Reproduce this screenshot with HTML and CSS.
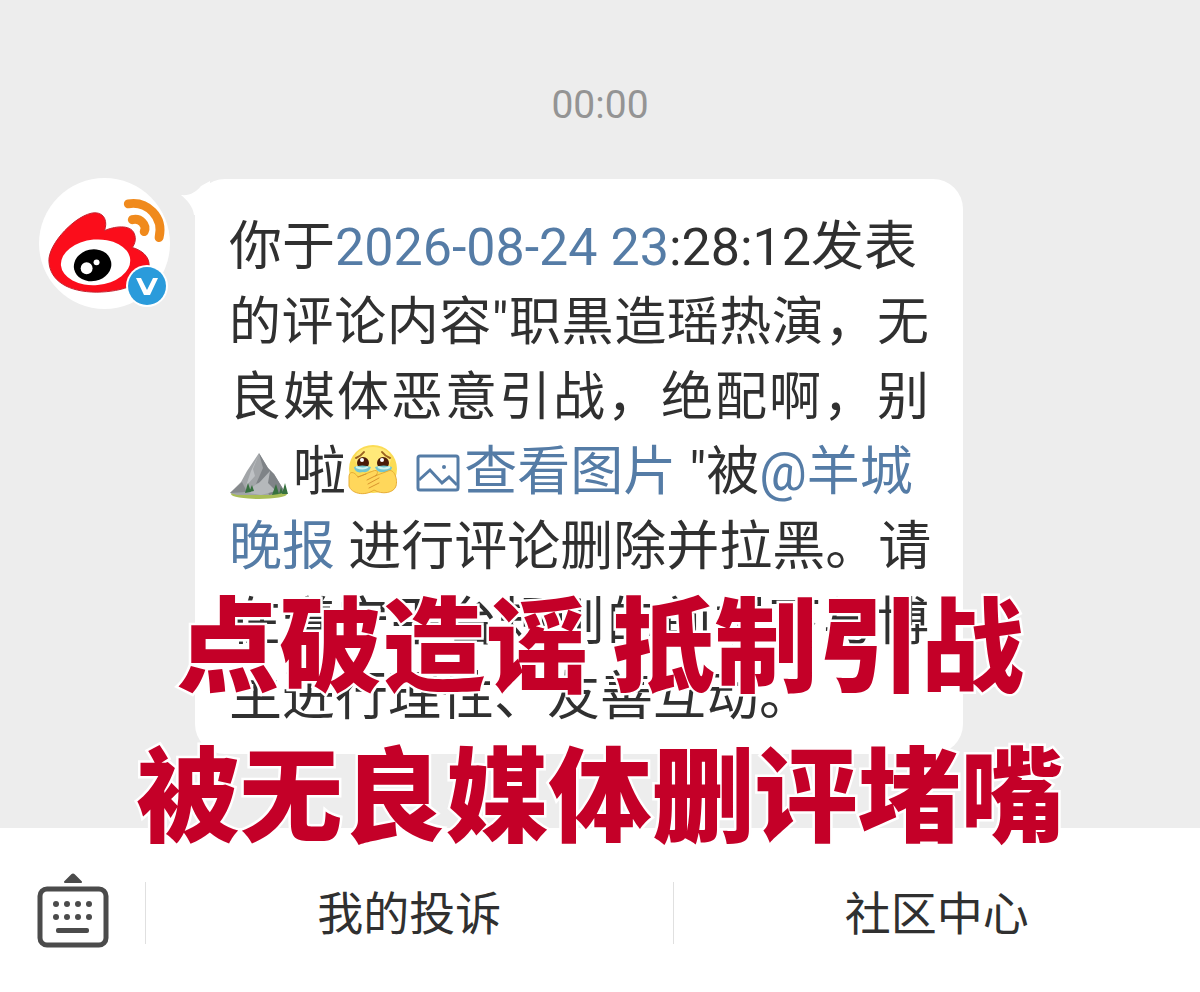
FILE: index.html
```
<!DOCTYPE html>
<html lang="zh-CN">

<head>
    <meta charset="UTF-8">
    <title>消息</title>
    <link rel="stylesheet" href="styles.css">
</head>

<body>

<main class="chat">
    <time class="time">00:00</time>

    <div class="message">
        <div class="avatar">
            <svg class="logo" viewBox="0 0 132 132" aria-hidden="true">
                <path d="M10 84C9 66 38 36 56 35C67 35 69 45 66 53C75 49 92 46 96 56C98 61 97 66 94 70C104 73 111 79 111 88C110 106 84 115 58 115C30 115 11 104 10 84Z" fill="#fb0d1b" stroke="#c5202d" stroke-width="1"/>
                <ellipse cx="57" cy="85" rx="35" ry="23" transform="rotate(-5 57 85)" fill="#fff"/>
                <ellipse cx="54" cy="88" rx="19" ry="16" transform="rotate(-12 54 88)" fill="#000"/>
                <circle cx="48" cy="91" r="6" fill="#fff"/>
                <circle cx="58" cy="85" r="3" fill="#fff"/>
                <path d="M90 26C109 23 126 39 121 60" fill="none" stroke="#f08a1d" stroke-width="9" stroke-linecap="round"/>
                <path d="M94 42C102 40 109 47 106 54" fill="none" stroke="#f08a1d" stroke-width="9" stroke-linecap="round"/>
            </svg>
            <svg class="badge" viewBox="0 0 42 42" aria-hidden="true">
                <circle cx="21" cy="21" r="21" fill="#fff"/>
                <circle cx="21" cy="21" r="19" fill="#2a9bdb"/>
                <path d="M10 13H15L21 25L27 13H32L24 30H18Z" fill="#fff"/>
            </svg>
        </div>

        <div class="bubble">
            <svg class="tail" viewBox="0 0 30 34" aria-hidden="true">
                <path d="M1 14C10 15 16 11 21 5L30 0V34H14C13 26 8 20 1 14Z" fill="#fff"/>
            </svg>
            <p class="text">
                你于<span class="date"><a href="#">2026-08-24 23</a>:28:12</span>发表
                <span class="full">的评论内容"职黒造瑶热演，无</span>
                <span class="full">良媒体恶意引战，绝配啊，别</span>
                <svg class="mountain" viewBox="0 0 60 52" role="img" aria-label="山">
                    <ellipse cx="30" cy="45" rx="28" ry="5" fill="#a9bd58"/>
                    <path d="M1 44L12 33L18 22L30 4L39 19L45 25L56 43L40 46H8Z" fill="#a2a5a8"/>
                    <path d="M30 4L39 19L45 25L56 43L40 46L36 31L27 35L34 19Z" fill="#7f8387"/>
                    <path d="M30 5L24 20L26 27L17 37L22 22Z" fill="#bec1c4"/>
                    <path d="M14 43L30 34L41 22L39 34L47 42L32 46Z" fill="#b5b8bb"/>
                    <path d="M1 44L13 33L18 43Z" fill="#85898c"/>
                    <path d="M16 44L19 34L22 43ZM20 43L23 36L25 42ZM43 46L47 35L50 45ZM50 45L52 38L54 44ZM53 45L56 34L59 45Z" fill="#37713f"/>
                </svg>啦<svg class="emoji" viewBox="0 0 52 52" role="img" aria-label="流泪">
                    <circle cx="26" cy="25" r="24" fill="#fbdc55"/>
                    <ellipse cx="26" cy="15" rx="18" ry="12" fill="#ffe979"/>
                    <path d="M9 14Q14 12 17 8M43 14Q38 12 35 8" fill="none" stroke="#9b6220" stroke-width="2" stroke-linecap="round"/>
                    <circle cx="16" cy="19" r="6" fill="#4b1c08"/>
                    <circle cx="36" cy="19" r="6" fill="#4b1c08"/>
                    <circle cx="15" cy="16" r="2" fill="#fff"/>
                    <circle cx="35" cy="16" r="2" fill="#fff"/>
                    <path d="M7 23Q15 20 24 23Q22 29 16 28Q8 30 7 23ZM28 23Q37 20 45 23Q44 30 36 28Q30 29 28 23Z" fill="#72c5cf"/>
                    <path d="M9 23Q16 26 21 23M31 23Q37 26 43 23" fill="none" stroke="#d1f5ef" stroke-width="2"/>
                    <path d="M2 33C2 27 7 27 11 33L26 27C31 25 32 29 28 32L41 27C47 24 51 35 49 42C47 49 35 51 27 46C17 53 4 49 2 42Z" fill="#ffd75b" stroke="#e7ad35" stroke-width="1"/>
                    <path d="M11 33L19 30M20 36L30 31M21 40L32 34M22 44L32 39" fill="none" stroke="#d9942e" stroke-width="1" stroke-linecap="round"/>
                </svg>
                <a href="#"><svg class="picture" viewBox="0 0 44 38" aria-hidden="true">
                    <rect x="2" y="2" width="40" height="34" rx="2" fill="none" stroke="#557ca6" stroke-width="3"/>
                    <path d="M3 26L14 16L26 29L33 23L41 31" fill="none" stroke="#557ca6" stroke-width="3"/>
                    <circle cx="28" cy="13" r="2" fill="#557ca6"/>
                </svg>查看图片</a> "被<a href="#">@羊城<br>
                晚报</a> 进行评论删除并拉黑。请
                <span class="full">在遵守平台规则的前提下与博</span>
                主进行理性、友善互动。
            </p>
        </div>
    </div>
</main>

<footer class="bar">
    <button class="keyboard" type="button" aria-label="键盘">
        <svg viewBox="0 0 72 76" aria-hidden="true">
            <path d="M28 9L35 2Q36 1 37 2L44 9Z" fill="#4b4b4b" stroke="#4b4b4b" stroke-width="2" stroke-linejoin="round"/>
            <rect x="3" y="16" width="66" height="56" rx="7" fill="none" stroke="#4b4b4b" stroke-width="5"/>
            <g fill="#4b4b4b">
                <circle cx="19" cy="31" r="3"/><circle cx="30" cy="31" r="3"/><circle cx="41" cy="31" r="3"/><circle cx="52" cy="31" r="3"/>
                <circle cx="19" cy="44" r="3"/><circle cx="30" cy="44" r="3"/><circle cx="41" cy="44" r="3"/><circle cx="52" cy="44" r="3"/>
                <rect x="19" y="55" width="33" height="5" rx="2"/>
            </g>
        </svg>
    </button>
    <button class="menu" type="button">我的投诉</button>
    <button class="menu" type="button">社区中心</button>
</footer>

<h1 class="caption">点破造谣 抵制引战<br>被无良媒体删评堵嘴</h1>

</body>

</html>
```
FILE: styles.css
```
body {
    margin: 0;
    min-height: 100vh;
    display: flex;
    flex-direction: column;
    position: relative;
    font-family: Roboto, "Noto Sans CJK SC", sans-serif;
    color: #303030;
    background: #ededed;
}

a {
    color: #557ca6;
    text-decoration: none;
}

.chat {
    flex: 1;
    padding: 80px 39px 0;
}

.time {
    display: block;
    text-align: center;
    font-size: 39px;
    line-height: 50px;
    color: #949494;
}

.message {
    display: flex;
    align-items: flex-start;
    gap: 25px;
    margin-top: 48px;
}

.avatar {
    position: relative;
    flex: none;
    width: 131px;
    height: 131px;
    border-radius: 50%;
    background: #fff;
}
.logo {
    display: block;
    width: 100%;
}
.badge {
    position: absolute;
    right: 2px;
    bottom: 2px;
    width: 42px;
}

.bubble {
    position: relative;
    box-sizing: border-box;
    flex: 1;
    max-width: 768px;
    padding: 31px 34px 19px;
    margin-top: 1px;
    border-radius: 30px;
    background: #fff;
}
.tail {
    position: absolute;
    left: -15px;
    top: 2px;
    width: 30px;
}

.text {
    margin: 0;
    font-size: 53px;
    line-height: 75px;
    white-space: nowrap;
}
.date {
    font-size: 52px;
}
/* lines that run the whole width of the bubble */
.full {
    display: block;
    font-size: 52px;
    text-align: justify;
    text-align-last: justify;
}
.mountain {
    width: 60px;
    margin-right: 4px;
    vertical-align: -11px;
}
.emoji {
    width: 52px;
    margin: 0 4px 0 1px;
    vertical-align: -6px;
}
.picture {
    width: 44px;
    margin-right: 4px;
    vertical-align: -2px;
}

.bar {
    display: flex;
    align-items: center;
    height: 164px;
    background: #fff;
}
.bar button {
    padding: 0;
    border: none;
    font: inherit;
    color: inherit;
    background: none;
}
.bar .keyboard {
    width: 145px;
    padding-top: 6px;
}
.keyboard svg {
    width: 72px;
}
.bar .menu {
    flex: 1;
    height: 62px;
    margin-top: 6px;
    border-left: 1px solid #e0e0e0;
    font-size: 46px;
    line-height: 64px;
}

/* headline laid over the conversation */
.caption {
    position: absolute;
    left: 0;
    right: 0;
    bottom: 127px;
    margin: 0;
    text-align: center;
    font-family: "Noto Sans CJK SC", sans-serif;
    font-size: 103px;
    font-weight: 900;
    line-height: 150px;
    color: #c40028;
    -webkit-text-stroke: 5px #fff;
    paint-order: stroke fill;
    pointer-events: none;
}
```
